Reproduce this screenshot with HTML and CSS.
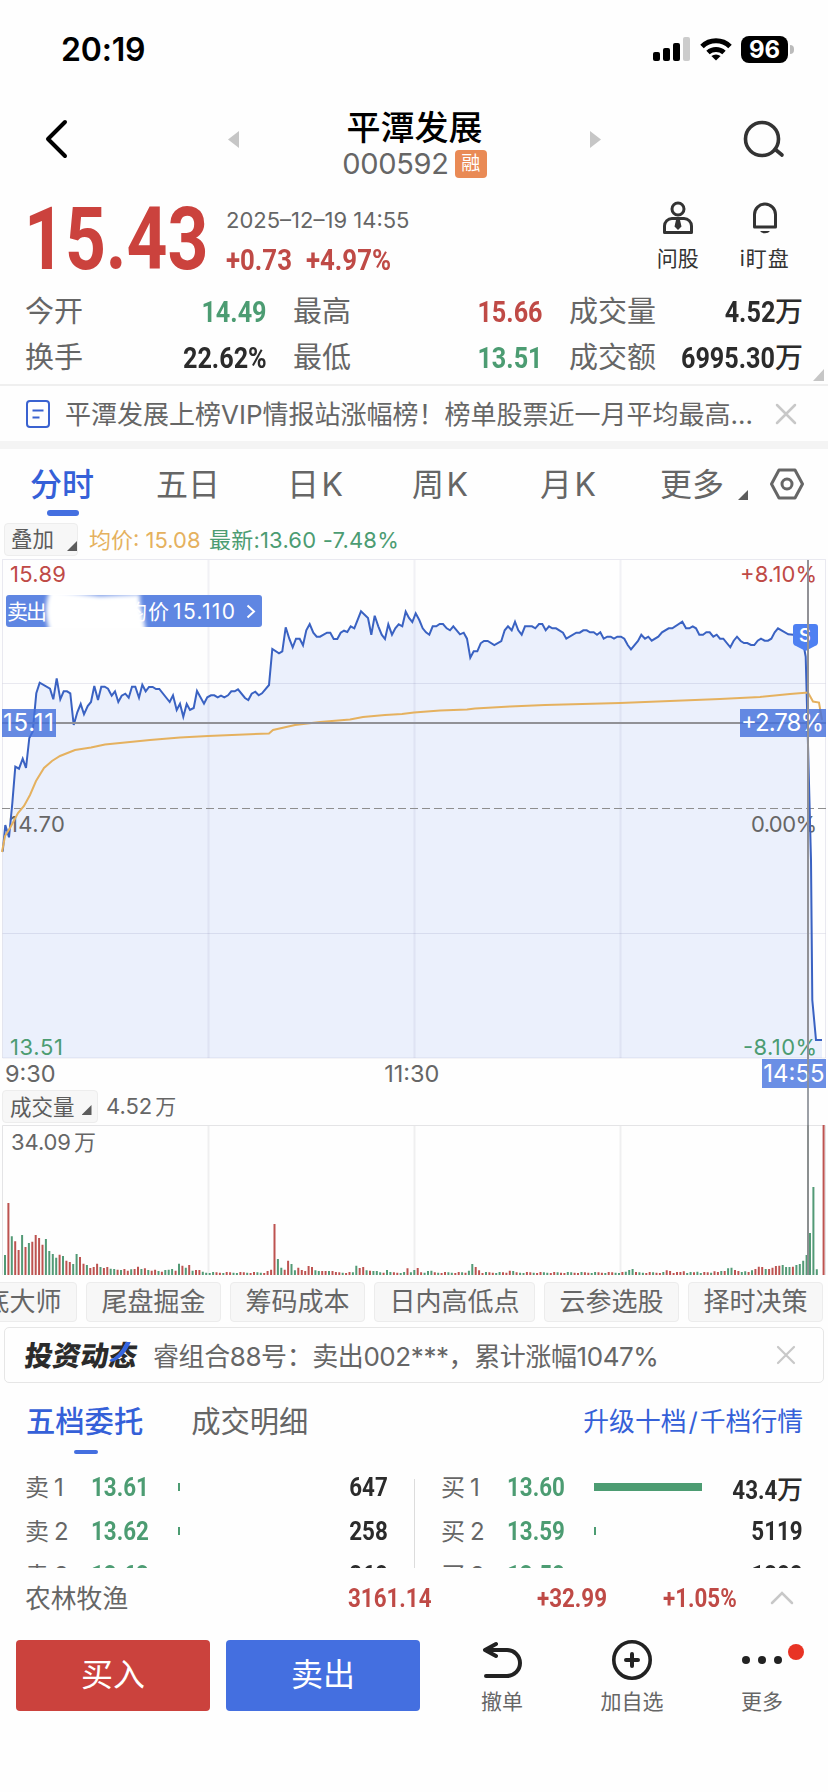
FILE: index.html
```html
<!DOCTYPE html>
<html lang="zh-CN">
<head>
<meta charset="utf-8">
<title>平潭发展 000592</title>
<link rel="stylesheet" href="styles.css">
</head>
<body>
<div class="screen">
  <div class="status">
    <span class="clock">20:19</span>
    <div class="status-icons">
      <svg width="38" height="24" viewBox="0 0 38 24"><rect x="0" y="15" width="7" height="9" rx="2"/><rect x="10" y="11" width="7" height="13" rx="2"/><rect x="20" y="6" width="7" height="18" rx="2"/><rect x="30" y="0" width="7" height="24" rx="2" fill="#ccc"/></svg>
      <svg width="32" height="25" viewBox="0 0 32 25" fill="none" stroke="#000" stroke-width="5"><path d="M2 9.500a20 20 0 0 1 28 0"/><path d="M8 15.500a12 12 0 0 1 16 0"/><path d="M16 23.500l-4.600-4.400a7 7 0 0 1 9.200 0z" fill="#000" stroke="none"/></svg>
      <div class="battery">96</div><i class="nub"></i>
    </div>
  </div>

  <header class="head">
    <svg class="back" width="24" height="40" viewBox="0 0 24 40" fill="none" stroke="#000" stroke-width="4" stroke-linecap="round" stroke-linejoin="round"><path d="M20 3L3 20l17 17"/></svg>
    <svg width="11" height="17" viewBox="0 0 11 17"><path d="M11 0v17L0 8.500z" fill="#c6c6c6"/></svg>
    <div class="title">
      <h1>平潭发展</h1>
      <div class="code"><span>000592</span><b>融</b></div>
    </div>
    <svg width="11" height="17" viewBox="0 0 11 17"><path d="M0 0v17l11-8.500z" fill="#c6c6c6"/></svg>
    <svg class="search" width="42" height="40" viewBox="0 0 42 40" fill="none" stroke="#333" stroke-width="3.600" stroke-linecap="round"><circle cx="19" cy="20" r="16.500"/><path d="M33 31l6 5"/></svg>
  </header>

  <section class="quote">
    <div class="price"><span>15.43</span></div>
    <div class="quote-mid">
      <div class="date">2025–12–19 14:55</div>
      <div class="delta"><span class="num">+0.73</span><span class="num">+4.97%</span></div>
    </div>
    <div class="action ask">
      <svg width="32" height="34" viewBox="0 0 32 34" fill="none" stroke="#333" stroke-width="3"><circle cx="16" cy="8" r="6"/><path d="M2.500 31.500V25a7.500 7.500 0 0 1 7.500-7.500h12a7.500 7.500 0 0 1 7.500 7.500v6.500z" stroke-linejoin="round"/><path d="M14 19h4l1.500 6.500L16 29l-3.500-3.500z" fill="#333" stroke="none"/></svg>
      <span>问股</span>
    </div>
    <div class="action watch">
      <svg width="28" height="34" viewBox="0 0 28 34" fill="none" stroke="#333" stroke-width="3"><path d="M3.500 26V13.500a10.500 10.500 0 0 1 21 0V26z" stroke-linejoin="round"/><path d="M9 30h10a5.500 4 0 0 1-10 0z" fill="#333" stroke="none"/></svg>
      <span>i盯盘</span>
    </div>
  </section>

  <section class="stats">
    <div><label>今开</label><span class="num green">14.49</span></div>
    <div><label>最高</label><span class="num red">15.66</span></div>
    <div><label>成交量</label><span class="val"><span class="num">4.52</span>万</span></div>
    <div><label>换手</label><span class="num">22.62%</span></div>
    <div><label>最低</label><span class="num green">13.51</span></div>
    <div><label>成交额</label><span class="val"><span class="num">6995.30</span>万</span></div>
    <i class="corner"></i>
  </section>

  <div class="news">
    <svg width="24" height="28" viewBox="0 0 24 28" fill="none" stroke="#3a62d0" stroke-width="2"><rect x="1" y="1" width="22" height="26" rx="3"/><path d="M6.500 10.500h11M6.500 17.500h7"/></svg>
    <p>平潭发展上榜VIP情报站涨幅榜！榜单股票近一月平均最高…</p>
    <svg width="22" height="22" viewBox="0 0 22 22" stroke="#c8c8c8" stroke-width="2.500" stroke-linecap="round"><path d="M2 2l18 18M20 2L2 20"/></svg>
  </div>

  <nav class="tabs">
    <span class="on">分时</span><span>五日</span><span class="k">日K</span><span class="k">周K</span><span class="k">月K</span><span>更多</span>
    <i class="tri"></i>
    <svg width="34" height="32" viewBox="0 0 34 32" fill="none" stroke="#666" stroke-width="3" stroke-linejoin="round"><path d="M9 2h16l7.500 14L25 30H9L1.500 16z"/><circle cx="17" cy="16" r="5"/></svg>
  </nav>

  <div class="legend">
    <span class="pill"><em>叠加</em><i class="tri"></i></span>
    <span class="avg">均价: 15.08</span><span class="last">最新:13.60 -7.48%</span>
  </div>

  <svg class="chart" id="price" width="828" height="500" viewBox="0 559 828 500">
    <defs><filter id="soft" x="-20%" y="-20%" width="140%" height="140%"><feGaussianBlur stdDeviation="2"/></filter><clipPath id="tagClip"><rect x="0" y="594" width="262" height="34"/></clipPath></defs>
    <path id="area" fill="#ebf0fc"/>
    <g stroke="#1a1a60"><path d="M208.500 560v498M414.500 560v498M620.500 560v498" stroke-width="2" stroke-opacity=".055"/><path d="M2.500 683.500h823M2.500 933.500h823M2.500 559.500h823V1058H2.500z" fill="none" stroke-opacity=".09"/></g>
    <path d="M2 808.500h824" stroke="#8e8e8e" stroke-width="1.200" stroke-dasharray="8 4"/>
    <g class="lbl"><text x="10" y="582" class="f-red" textLength="56">15.89</text><text x="740" y="582" class="f-red" textLength="77">+8.10%</text><text x="9" y="832" textLength="56">14.70</text><text x="751" y="832" textLength="66">0.00%</text><text x="10" y="1055" class="f-green" textLength="53">13.51</text><text x="743" y="1055" class="f-green" textLength="74">-8.10%</text></g>
    <path id="line" fill="none" stroke="#3a62c2" stroke-width="2"/>
    <path d="M2 852L5 836L10 828L18 813L24 806L30 795L36 781L44 768L52 761L60 756L75 750L91 747.500L105 744.500L130 742L150 740L180 737.500L208 736L269 733.500L273 730L284 727.500L295 725L320 722L350 719.500L363 717L385 715L402 714L414 712.500L440 710.500L467 709.500L475 708.500L510 706.500L545 705L620 703L670 701L720 699L760 697L790 694L808 692.500L813 701.500L819 702.500L822 720" fill="none" stroke="#e5b15f" stroke-width="2"/>
    <path d="M2 723h824" stroke="#919196" stroke-width="2"/>
    <g><path d="M2 709h54v28H2z" class="tag"/><text class="tagtext" x="3" y="731" textLength="51">15.11</text><path d="M740 709h86v28h-86z" class="tag"/><text class="tagtext" x="741" y="731" textLength="83">+2.78%</text></g>
    <rect x="6" y="595" width="256" height="32" rx="3" fill="#5f86e2"/>
    <text class="sell" x="7" y="619" textLength="40">卖出</text><text class="sell" x="126" y="619" textLength="43">均价</text><text class="sell" x="173" y="619" textLength="62">15.110</text>
    <path d="M247.500 605.500l6.500 6-6.500 6" fill="none" stroke="#fff" stroke-width="2"/>
    <g clip-path="url(#tagClip)"><path d="M50 590L100 596L140 594Q139 604 143 614L146 632H50Q42 610 50 590z" fill="#fff" filter="url(#soft)"/></g>
    <path d="M796 624h19q3 0 3 3v15q0 3-3 4l-9.500 5-9.500-5q-3-1-3-4v-15q0-3 3-3z" fill="#4e80f2"/><text x="799" y="642" font-size="18" font-weight="600" fill="#fff">S</text>
    <path d="M808 560v499" stroke="#919196" stroke-width="2"/>
  </svg>

  <div class="axis">
    <div class="times"><span>9:30</span><span class="noon">11:30</span><span class="now">14:55</span></div>
    <div class="vol-head"><span class="pill"><em>成交量</em><i class="tri"></i></span><span class="vol">4.52<em>万</em></span></div>
  </div>

  <svg class="chart" width="828" height="151" viewBox="0 1125 828 151">
    <path d="M208.500 1126v149M414.500 1126v149M620.500 1126v149" stroke="#efeff0" stroke-width="2"/>
    <path d="M2.500 1275V1125.500h823V1275" fill="none" stroke="#e4e4e6"/>
    <path id="up" stroke="#bd5350" stroke-width="2"/><path id="down" stroke="#539a76" stroke-width="2"/>
    <g class="lbl"><text x="11" y="1150" textLength="60">34.09</text><text x="74" y="1150">万</text></g>
    <path d="M808 1125v150" stroke="#8b8f90" stroke-width="2"/>
  </svg>

  <div class="chips"><span>抄底大师</span><span>尾盘掘金</span><span>筹码成本</span><span>日内高低点</span><span>云参选股</span><span>择时决策</span></div>

  <div class="feed">
    <b>投资动态<svg width="22" height="22" viewBox="0 0 22 22"><path d="M1 20Q10 17 15 2h5Q15 19 3 22z" fill="#3565e0"/></svg></b>
    <p>睿组合88号：卖出002***，累计涨幅1047%</p>
    <svg width="20" height="20" viewBox="0 0 20 20" stroke="#c8c8c8" stroke-width="2.200" stroke-linecap="round"><path d="M2 2l16 16M18 2L2 18"/></svg>
  </div>

  <div class="book-tabs"><span class="on">五档委托</span><span>成交明细</span><a>升级十档<em>/</em>千档行情</a></div>

  <div class="book">
    <div class="side">
      <div><label>卖<i>1</i></label><span class="num green">13.61</span><s class="tick"></s><span class="num qty">647</span></div>
      <div><label>卖<i>2</i></label><span class="num green">13.62</span><s class="tick"></s><span class="num qty">258</span></div>
      <div><label>卖<i>3</i></label><span class="num green">13.63</span><s></s><span class="num qty">268</span></div>
    </div>
    <div class="side buy">
      <div><label>买<i>1</i></label><span class="num green">13.60</span><s class="full"></s><span class="val"><span class="num">43.4</span>万</span></div>
      <div><label>买<i>2</i></label><span class="num green">13.59</span><s class="tick"></s><span class="num qty">5119</span></div>
      <div><label>买<i>3</i></label><span class="num green">13.58</span><s></s><span class="num qty">1388</span></div>
    </div>
  </div>

  <div class="sector"><label>农林牧渔</label><span class="num red">3161.14</span><span class="num red">+32.99</span><span class="num red">+1.05%</span>
    <svg width="26" height="14" viewBox="0 0 26 14" fill="none" stroke="#c8c8c8" stroke-width="2.500" stroke-linecap="round"><path d="M3 12L13 2l10 10"/></svg></div>

  <footer class="foot">
    <button class="btn-buy">买入</button><button class="btn-sell">卖出</button>
    <div class="tool"><svg width="42" height="40" viewBox="0 0 42 40" fill="none" stroke="#222" stroke-width="4" stroke-linecap="round" stroke-linejoin="round"><path d="M15 4L4 10l11 6M4 10h22a13 13 0 0 1 0 26H5"/></svg><span>撤单</span></div>
    <div class="tool"><svg width="42" height="40" viewBox="0 0 42 40" fill="none" stroke="#222" stroke-width="3.600" stroke-linecap="round"><circle cx="21" cy="20" r="18.200"/><path d="M21 14v12M15 20h12" stroke-width="4"/></svg><span>加自选</span></div>
    <div class="tool"><svg width="42" height="40" viewBox="0 0 42 40" fill="#222"><circle cx="5" cy="20" r="4"/><circle cx="21" cy="20" r="4"/><circle cx="37" cy="20" r="4"/></svg><span>更多</span><i class="dot"></i></div>
  </footer>
</div>
<script src="script.js"></script>
</body>
</html>
```

FILE: styles.css
```css
* { box-sizing: border-box; }
body { margin: 0; background: #fff; }
.screen { width: 828px; height: 1792px; overflow: hidden; background: #fefefe; color: #666; font-family: Inter, "Noto Sans CJK SC", sans-serif; white-space: nowrap; }
svg { display: block; flex: none; }
i, em { font-style: normal; }
h1, p { margin: 0; }
label { display: block; }
.num { display: inline-block; font-family: Roboto, "Noto Sans CJK SC", sans-serif; font-weight: 700; font-size: 30px; color: #2b2b2b; transform: scaleX(.84); transform-origin: right center; }
.red { color: #bf4a46; }
.green { color: #4c9c72; }

.status { height: 98px; padding: 0 34px 0 61px; display: flex; align-items: center; justify-content: space-between; }
.clock { font-size: 32px; font-weight: 600; color: #000; letter-spacing: -.2px; }
.status-icons { display: flex; align-items: center; height: 26px; }
.status-icons svg:first-child { margin-right: 9px; }
.battery { margin-left: 9px; width: 47px; height: 27px; border-radius: 8px; background: #000; color: #fff; font-size: 24px; line-height: 27px; font-weight: 700; text-align: center; }
.nub { width: 4px; height: 9px; margin-left: 2px; border-radius: 0 4px 4px 0; background: #bbb; }

.head { height: 92px; padding: 0 43px 10px 45px; display: flex; align-items: center; }
.back { margin-right: 159px; }
.title { width: 351px; display: flex; flex-direction: column; align-items: center; }
.title h1 { font-size: 34px; line-height: 42px; height: 40px; font-weight: 500; color: #000; margin-top: 9px; }
.code { display: flex; align-items: center; height: 34px; gap: 6px; font-size: 29px; letter-spacing: -.3px; }
.code b { width: 32px; height: 28px; border-radius: 4px; background: #e98a55; color: #fff; font-size: 19px; line-height: 27px; font-weight: 400; text-align: center; letter-spacing: 0; }
.search { margin-left: auto; }

.quote { height: 95px; padding-left: 24px; display: flex; }
.price { width: 202px; height: 95px; }
.price span { display: inline-block; font: 700 87px/98px Roboto, sans-serif; color: #cb423d; transform: scaleX(.82); transform-origin: left center; }
.quote-mid { width: 433px; padding-top: 15px; }
.date { font-size: 22px; line-height: 30px; }
.delta { display: flex; height: 40px; margin-top: 5px; }
.delta .num { width: 80px; line-height: 40px; font-size: 29px; color: #bf4a46; transform: scaleX(.89); transform-origin: left center; }
.action { padding-top: 11px; color: #333; font-size: 21px; display: flex; flex-direction: column; align-items: center; line-height: 30px; }
.action span { margin-top: 9px; }
.ask { width: 48px; }
.watch { width: 128px; }
.watch span { letter-spacing: 1px; }

.stats { position: relative; height: 101px; padding: 4px 25px 3px; border-bottom: 2px solid #efefef; display: grid; grid-template-columns: 242px 250px 234px; column-gap: 26px; grid-auto-rows: 46px; }
.stats > div { display: flex; justify-content: space-between; align-items: center; font-size: 29px; line-height: 46px; }
.val { color: #2b2b2b; font-weight: 500; font-size: 28px; }
.corner { position: absolute; right: 4px; bottom: 3px; width: 11px; height: 12px; background: #c6c6c6; clip-path: polygon(100% 0, 100% 100%, 0 100%); }

.news { height: 55px; padding: 0 31px 0 26px; display: flex; align-items: center; font-size: 26px; }
.news p { width: 704px; margin: 0 6px 0 15px; padding-bottom: 3px; }

.tabs { height: 78px; border-top: 8px solid #f4f4f4; padding-left: 30px; display: grid; grid-template-columns: 126px 131px 125px 128px 120px 78px 32px 34px; align-items: center; font-size: 32px; }
.tabs span { padding-bottom: 5px; }
.tabs .k { letter-spacing: 2.500px; }
.tabs .on { position: relative; color: #3560d8; font-weight: 500; }
.tabs .on::after { content: ""; position: absolute; left: 17px; top: 51px; width: 32px; height: 6px; border-radius: 3px; background: #446fe0; }
.tri { display: block; width: 10px; height: 10px; background: #5c5c5c; clip-path: polygon(100% 0, 100% 100%, 0 100%); }
.tabs .tri { margin-top: 22px; }

.legend { height: 40px; padding: 0 4px; display: flex; align-items: center; font-size: 22px; }
.pill { display: flex; align-items: center; height: 33px; border: 1px solid #ededed; border-radius: 4px; background: #f7f7f7; color: #5c5c5c; font-size: 21.500px; }
.pill em { padding-bottom: 3px; }
.legend .pill { width: 74px; padding-left: 6px; }
.legend .tri { margin: 14px 0 0 13px; }
.avg { margin-left: 11px; width: 120px; padding-bottom: 3px; color: #e5b15f; }
.last { padding-bottom: 3px; color: #4c9c72; letter-spacing: .2px; }

.lbl { font-size: 22px; fill: #666; }
.f-red { fill: #bf4a46; }
.f-green { fill: #4c9c72; }
.tag { fill: #4470dc; fill-opacity: .82; }
.tagtext { font-size: 24px; fill: #fff; }
.sell { font-size: 21px; fill: #fff; }

.axis { position: relative; }
.axis::after { content: ""; position: absolute; left: 807px; top: 0; width: 2px; height: 66px; background: #8b8f96; opacity: .85; }
.times { height: 29px; padding: 0 2px 0 5px; display: flex; justify-content: space-between; font-size: 23.500px; line-height: 29px; }
.noon { margin-left: 6px; }
.now { width: 64px; height: 29px; background: #6b8fe5; color: #fff; font-size: 24px; text-align: center; }
.vol-head { height: 37px; padding-left: 2px; display: flex; align-items: center; gap: 8px; font-size: 22px; }
.vol-head .pill { width: 96px; padding-left: 7px; }
.vol-head .tri { margin: 7px 0 0 7px; }
.vol { padding-bottom: 4px; }
.vol em { margin-left: 3px; font-size: 21px; }

.chips { height: 51px; display: flex; justify-content: flex-end; align-items: center; gap: 9px; padding-right: 5px; font-size: 26px; }
.chips span { height: 40px; padding: 0 14.500px; line-height: 37px; border: 1px solid #ececec; border-radius: 4px; background: #f7f7f7; }
.chips span:first-child { margin-left: -80px; }

.feed { height: 56px; margin: 0 4px; padding: 0 27px 0 20px; border: 1.500px solid #e6e6e6; border-radius: 5px; display: flex; align-items: center; font-size: 26px; }
.feed b { position: relative; width: 128px; padding-bottom: 2px; color: #2b2b2b; font-weight: 900; font-size: 28px; transform: skewX(-8deg); }
.feed b svg { position: absolute; left: 84px; top: 6px; }
.feed p { flex: 1; padding-bottom: 2px; letter-spacing: -.42px; }

.book-tabs { height: 79px; padding: 0 25px 7px 26px; display: flex; align-items: center; gap: 48px; font-size: 29.300px; }
.book-tabs .on { position: relative; color: #3560d8; font-weight: 500; }
.book-tabs .on::after { content: ""; position: absolute; left: 48px; bottom: -14px; width: 24px; height: 4px; border-radius: 2px; background: #446fe0; }
.book-tabs a { margin-left: auto; font-size: 25.800px; color: #3560d8; }
.book-tabs em { margin: 0 2px; }

.book { height: 106px; padding: 3px 25px 0; overflow: hidden; display: grid; grid-template-columns: 363px 362px; column-gap: 53px; position: relative; }
.book::after { content: ""; position: absolute; left: 414px; top: 17px; bottom: 0; width: 1px; background: #dcdcdc; }
.side > div { height: 44px; display: grid; grid-template-columns: 66px 87px 108px 1fr; align-items: center; font-size: 24px; }
.side label { padding-bottom: 3px; }
.side .num { font-size: 26px; transform: scaleX(.86); transform-origin: left center; }
.side .num.qty, .side .val .num { transform-origin: right center; }
.side .qty, .side .val { justify-self: end; font-size: 26px; }
.side label i { margin-left: 5px; }
.tick { width: 2px; height: 8px; background: #4c9c72; }
.full { width: 108px; height: 8px; background: #4c9c72; }

.sector { height: 60px; padding: 0 33px 1px 25px; display: grid; grid-template-columns: 323px 189px 126px 1fr 26px; align-items: center; font-size: 25.800px; }
.sector label { padding-bottom: 3px; }
.sector .num { font-size: 26px; transform: scaleX(.86); transform-origin: left center; }

.foot { padding: 12px 0 0 16px; display: flex; align-items: flex-start; }
.foot button { width: 194px; height: 71px; margin: 0 16px 0 0; padding: 0 0 2px; border: 0; border-radius: 4px; color: #fff; font: 400 32px/68px Inter, "Noto Sans CJK SC", sans-serif; }
.btn-buy { background: #cb423d; }
.btn-sell { background: #446fe0; }
.tool { position: relative; left: 1px; width: 130px; display: flex; flex-direction: column; align-items: center; font-size: 21px; line-height: 30px; }
.tool span { margin-top: 7px; }
.dot { position: absolute; left: 91px; top: 4px; width: 16px; height: 16px; border-radius: 50%; background: #e83324; }
```

FILE: script.js
```js
// Intraday price: coordinates in thirds of a pixel.
const left = "8,905 16,825 27,862 37,760 46,650 57,656 68,626 78,654 88,564 98,545 109,430 119,398 150,416 160,448 170,385 181,448 191,424 201,424 211,430 221,525 232,487 242,462 252,493 263,468 273,456 283,408 294,450 304,410 314,410 324,416 335,437 345,424 355,456 365,437 376,431 386,443 396,410 406,410 417,443 427,404 437,424 447,411 458,411 468,417 478,417 509,456 519,436 530,480 540,461 550,500 560,462 570,480 581,474 591,423 612,461 622,442 633,436 643,436 653,442 663,437 673,442 684,436 694,424 704,424 714,418 735,444 745,450 755,431 766,425 776,436 786,430 807,405 817,297 837,310 847,304 857,232 868,266 878,292 888,266 899,266 909,286 919,241 929,222 940,248 950,260 960,260 981,248 991,248 1001,267 1012,267 1022,248 1032,242 1042,246 1052,229 1063,235 1083,184 1104,204 1114,254 1124,197 1135,229 1145,254 1155,267 1165,223 1176,254 1186,235 1196,223 1207,229 1217,185 1227,204 1237,216";
const right = "17,190 28,210 38,235 48,247 58,254 68,229 79,229 89,222 99,222 110,235 120,241 130,229 150,253 161,248 171,266 181,323 191,304 202,304 212,280 222,273 233,273 253,285 274,273 284,241 294,229 305,241 315,215 325,241 335,254 345,229 366,229 376,235 387,222 397,222 407,241 417,229 427,235 438,235 459,248 469,266 499,248 509,248 520,241 530,241 540,247 551,247 561,254 571,247 581,266 592,260 602,260 612,266 622,260 633,260 643,266 653,285 663,298 684,273 694,254 705,266 715,260 725,272 745,260 756,247 776,235 787,235 817,215 828,235 838,235 848,229 858,235 868,254 879,254 889,247 899,247 910,260 920,254 930,266 940,266 961,292 971,272 981,260 992,273 1002,279 1012,279 1023,285 1033,285 1043,272 1053,266 1064,272 1074,272 1084,266 1094,247 1104,235 1135,253 1150,254 1178,270 1187,320 1193,550 1203,930 1207,1350 1218,1470 1236,1470";
const parse = (s, dx) => s.split(" ").map(p => { const [x, y] = p.split(",").map(Number); return [(x + dx) / 3, 550 + y / 3]; });
const pts = parse(left, 0).concat(parse(right, 1230));
const d = "M" + pts.map(p => p[0].toFixed(1) + " " + p[1].toFixed(1)).join("L");
document.getElementById("line").setAttribute("d", d);
document.getElementById("area").setAttribute("d", d + "V1058H2.7Z");

// Minute volume: bar index, height and direction.
const bars = "0:60g,1:216r,2:116g,3:101r,4:75r,5:120g,6:84r,7:96g,8:100r,9:120r,10:111r,11:91r,12:108g,13:72g,14:63g,15:52g,16:61r,17:57g,18:43r,19:39r,20:33g,21:63g,22:54r,23:34r,24:30g,25:21r,26:24r,27:34r,28:24g,29:21r,30:24r,31:19g,32:18g,33:16r,34:15g,35:18r,36:13r,37:17g,38:18r,39:25r,40:18g,41:20r,42:15g,43:13r,44:16r,45:12g,46:10r,47:15g,48:16g,49:18g,50:13r,51:34g,52:28r,53:22g,54:30r,55:13g,56:15r,57:15r,58:10g,59:7g,77:12r,78:16r,79:153r,80:48g,81:22g,82:16r,83:43r,84:33g,85:14g,86:22r,87:15r,88:12r,89:27r,90:24r,91:14g,92:12g,93:12r,94:12r,95:12g,96:12r,103:28g,104:21r,105:24r,106:14g,107:13r,108:12g,109:12g,112:15g,118:20r,119:8g,120:15g,121:21r,124:12g,125:13g,136:13g,137:33g,138:24r,139:14r,148:13r,149:12g,182:10g,183:15g,184:18g,185:9r,194:14r,195:12r,197:9r,198:9r,199:11r,203:10g,208:11r,210:12g,211:12r,212:20g,213:22g,214:15r,215:12r,216:9g,217:11g,218:9r,219:14g,220:18r,221:25r,222:24r,223:18g,224:18r,225:22r,226:27r,227:28r,228:30g,229:24g,230:24g,231:25r,232:30g,233:33g,234:43g,235:60g,236:126g,237:264g,238:17g,239:0g,240:450r";
const known = {};
bars.split(",").forEach(b => { const [i, v] = b.split(":"); known[i] = v; });
let up = "", down = "";
for (let i = 0; i < 241; i++) {
  const v = known[i] || (6 + (i * 7) % 4) + ((i * 5) % 7 < 4 ? "r" : "g");
  const seg = `M${(5 + i * 3.411).toFixed(1)} 1275v-${(parseInt(v) / 3).toFixed(1)}`;
  if (v.endsWith("r")) up += seg; else down += seg;
}
document.getElementById("up").setAttribute("d", up);
document.getElementById("down").setAttribute("d", down);
```
